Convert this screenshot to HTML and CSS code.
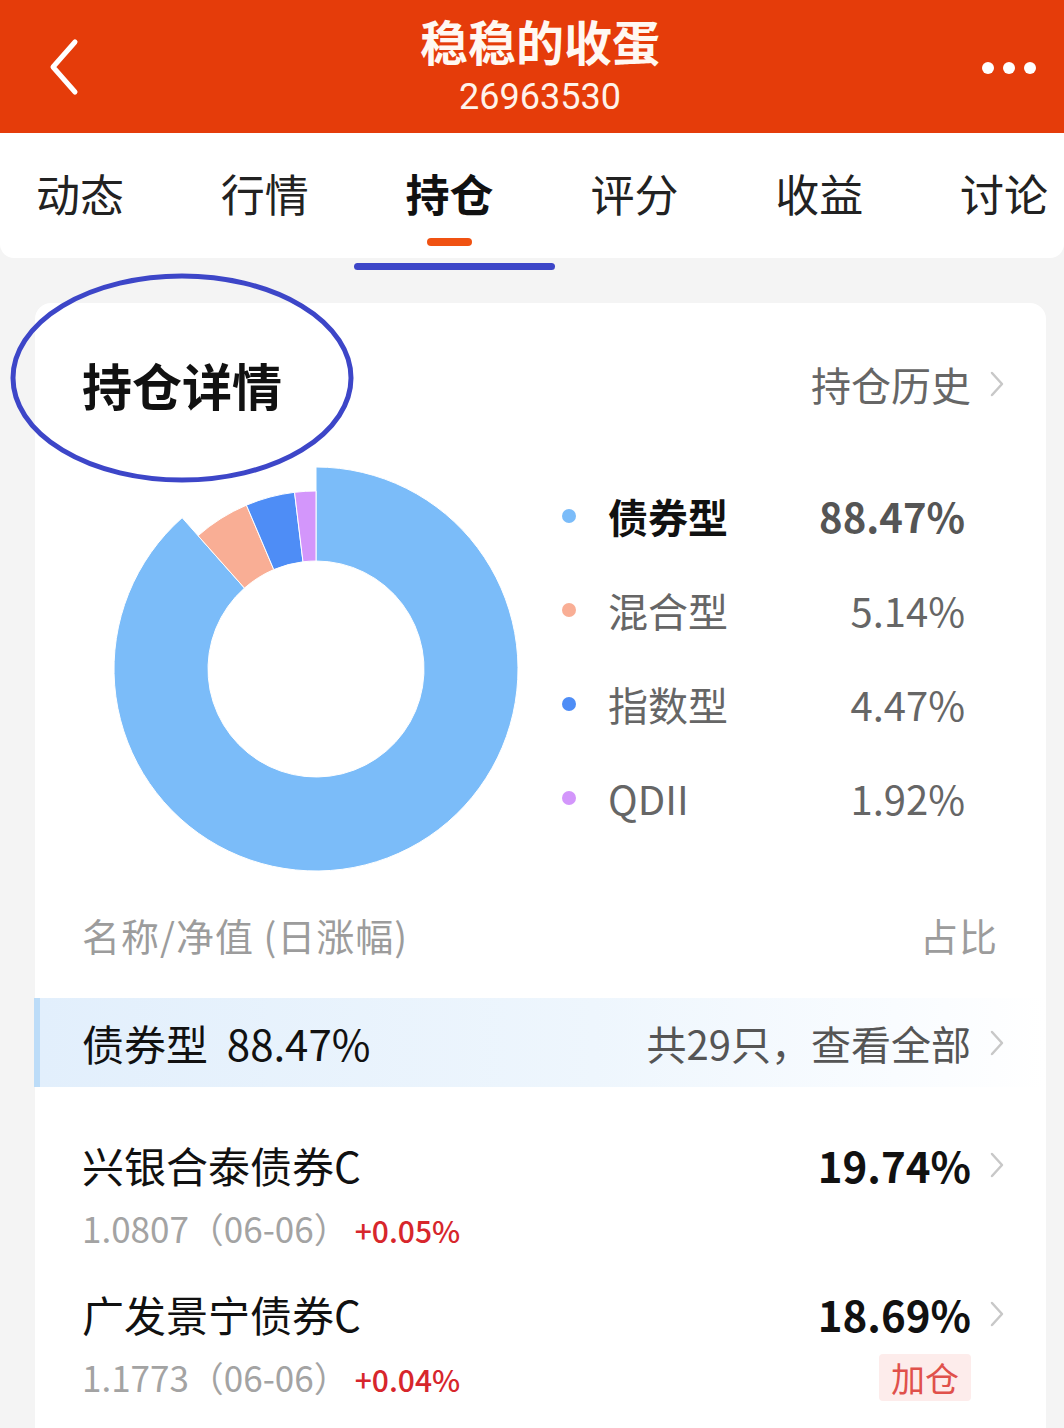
FILE: index.html
```html
<!DOCTYPE html>
<html lang="zh-CN">
<head>
<meta charset="utf-8">
<title>稳稳的收蛋</title>
<link rel="stylesheet" href="styles.css">
</head>
<body>
<div class="page">
  <header class="topbar">
    <svg class="back" width="40" height="60" viewBox="0 0 40 60"><polyline points="31,6 9,31 31,56" fill="none" stroke="#fff" stroke-width="5" stroke-linecap="round" stroke-linejoin="round"/></svg>
    <div class="title-wrap">
      <div class="title">稳稳的收蛋</div>
      <div class="subtitle">26963530</div>
    </div>
    <div class="more"><i></i><i></i><i></i></div>
  </header>

  <nav class="tabs">
    <div class="tab">动态</div>
    <div class="tab">行情</div>
    <div class="tab active">持仓<span class="bar"></span></div>
    <div class="tab">评分</div>
    <div class="tab">收益</div>
    <div class="tab">讨论</div>
  </nav>

  <main class="content">
    <section class="card">
      <div class="card-head">
        <h2 class="card-title">持仓详情</h2>
        <div class="head-link">持仓历史<svg class="chev" width="16" height="28" viewBox="0 0 16 28"><polyline points="3,3 13,14 3,25" fill="none" stroke="#c8c8c8" stroke-width="2.5" stroke-linecap="round" stroke-linejoin="round"/></svg></div>
      </div>

      <div class="chart-row">
        <svg class="donut" width="420" height="420" viewBox="0 0 420 420">
          <path d="M210,8 A202,202 0 1 1 76.15,58.71 L138.44,129.11 A108,108 0 1 0 210,102 Z" fill="#7bbcf9" stroke="#fff" stroke-width="1"/>
          <path d="M92.05,76.69 A178,178 0 0 1 140.42,46.16 L167.78,110.59 A108,108 0 0 0 138.44,129.11 Z" fill="#f9ae95" stroke="#fff" stroke-width="1"/>
          <path d="M140.42,46.16 A178,178 0 0 1 188.55,33.30 L196.99,102.79 A108,108 0 0 0 167.78,110.59 Z" fill="#4e8df6" stroke="#fff" stroke-width="1"/>
          <path d="M188.55,33.30 A178,178 0 0 1 210,32 L210,102 A108,108 0 0 0 196.99,102.79 Z" fill="#d396fb" stroke="#fff" stroke-width="1"/>
        </svg>
        <ul class="legend">
          <li class="legend-item main"><span class="dot c1"></span><span class="lg-name">债券型</span><span class="lg-val">88.47%</span></li>
          <li class="legend-item"><span class="dot c2"></span><span class="lg-name">混合型</span><span class="lg-val">5.14%</span></li>
          <li class="legend-item"><span class="dot c3"></span><span class="lg-name">指数型</span><span class="lg-val">4.47%</span></li>
          <li class="legend-item"><span class="dot c4"></span><span class="lg-name">QDII</span><span class="lg-val">1.92%</span></li>
        </ul>
      </div>

      <div class="table-head">
        <span>名称/净值 (日涨幅)</span>
        <span>占比</span>
      </div>

      <div class="group-row">
        <div class="group-name">债券型&nbsp; 88.47%</div>
        <div class="group-link">共29只，查看全部<svg class="chev" width="16" height="28" viewBox="0 0 16 28"><polyline points="3,3 13,14 3,25" fill="none" stroke="#c8c8c8" stroke-width="2.5" stroke-linecap="round" stroke-linejoin="round"/></svg></div>
      </div>

      <ul class="fund-list">
        <li class="fund">
          <div class="fund-left">
            <div class="fund-name">兴银合泰债券C</div>
            <div class="fund-sub">1.0807（06-06）<span class="up">+0.05%</span></div>
          </div>
          <div class="fund-right">
            <div class="fund-pct">19.74%<svg class="chev" width="16" height="28" viewBox="0 0 16 28"><polyline points="3,3 13,14 3,25" fill="none" stroke="#c8c8c8" stroke-width="2.5" stroke-linecap="round" stroke-linejoin="round"/></svg></div>
          </div>
        </li>
        <li class="fund">
          <div class="fund-left">
            <div class="fund-name">广发景宁债券C</div>
            <div class="fund-sub">1.1773（06-06）<span class="up">+0.04%</span></div>
          </div>
          <div class="fund-right">
            <div class="fund-pct">18.69%<svg class="chev" width="16" height="28" viewBox="0 0 16 28"><polyline points="3,3 13,14 3,25" fill="none" stroke="#c8c8c8" stroke-width="2.5" stroke-linecap="round" stroke-linejoin="round"/></svg></div>
            <div class="badge">加仓</div>
          </div>
        </li>
      </ul>
    </section>
  </main>

  <svg class="annot-ellipse" width="360" height="220" viewBox="0 0 360 220"><ellipse cx="178" cy="106" rx="169" ry="102" fill="none" stroke="#3d46c8" stroke-width="5"/></svg>
  <div class="annot-line"></div>
</div>
</body>
</html>
```

FILE: styles.css
```css
* { box-sizing: border-box; }
html, body { margin: 0; padding: 0; }
body {
  background: #f4f4f4;
  font-family: "Noto Sans CJK SC", "Noto Sans", sans-serif;
  color: #111;
  width: 1064px;
  height: 1428px;
  overflow: hidden;
}
ul { list-style: none; margin: 0; padding: 0; }
h2 { margin: 0; }

.page { position: relative; width: 1064px; height: 1428px; overflow: hidden; }

/* header */
.topbar {
  height: 133px;
  background: #e53c0a;
  display: grid;
  grid-template-columns: 1fr auto 1fr;
  align-items: center;
  padding: 0 28px 0 44px;
  color: #fff;
}
.back { display: block; margin-top: -2px; }
.title-wrap { text-align: center; display: flex; flex-direction: column; align-items: center; margin-top: -3px; }
.title { font-size: 48px; font-weight: 700; line-height: 48px; color: #fff8f2; }
.subtitle {
  font-family: Roboto, "Noto Sans", sans-serif;
  font-size: 36px;
  line-height: 36px;
  color: #fff3ea;
  margin-top: 15px;
}
.more { display: flex; gap: 9px; justify-self: end; margin-top: 2px; }
.more i { display: block; width: 12px; height: 12px; border-radius: 50%; background: #fff; }

/* tabs */
.tabs {
  height: 125px;
  background: #fff;
  display: flex;
  justify-content: space-between;
  padding: 38px 16px 0 36px;
  border-radius: 0 0 14px 14px;
}
.tab {
  font-size: 44px;
  line-height: 44px;
  color: #222;
  display: flex;
  flex-direction: column;
  align-items: center;
}
.tab.active { font-weight: 700; color: #111; }
.tab .bar {
  display: block;
  width: 45px;
  height: 8px;
  border-radius: 4px;
  background: #f05212;
  margin-top: 23px;
}

/* card */
.content { padding: 45px 18px 0 35px; }
.card {
  background: #fff;
  border-radius: 16px 16px 0 0;
  padding: 56px 41px 0 47px;
  height: 1125px;
}
.card-head {
  display: flex;
  justify-content: space-between;
  align-items: center;
  height: 50px;
}
.card-title { font-size: 50px; line-height: 50px; font-weight: 700; color: #111; }
.head-link {
  display: flex;
  align-items: center;
  font-size: 40px;
  color: #666;
}
.chev { display: block; margin-left: 18px; }

.chart-row {
  display: flex;
  margin-top: 50px;
  height: 420px;
}
.donut { display: block; margin-left: 24px; }
.legend {
  margin-left: 36px;
  width: 403px;
  padding-top: 10px;
}
.legend-item {
  height: 94px;
  display: flex;
  align-items: center;
  font-size: 40px;
  color: #666;
}
.legend-item .dot { width: 14px; height: 14px; border-radius: 50%; flex: none; }
.dot.c1 { background: #7bbcf9; }
.dot.c2 { background: #f9ae95; }
.dot.c3 { background: #4e8df6; }
.dot.c4 { background: #d396fb; }
.lg-name { margin-left: 32px; }
.lg-val { margin-left: auto; }
.legend-item.main .lg-name { font-weight: 700; color: #111; }
.legend-item.main .lg-val { font-weight: 700; color: #555; }

.table-head {
  display: flex;
  justify-content: space-between;
  font-size: 38px;
  line-height: 38px;
  letter-spacing: 1px;
  color: #9c9c9c;
  padding: 37px 7px 44px 0;
}

.group-row {
  margin: 0 -41px 0 -48px;
  height: 89px;
  border-left: 6px solid #bcdcf8;
  background: linear-gradient(90deg, #e2effc 0%, #eef6fd 55%, #f9fcff 85%, #ffffff 100%);
  display: flex;
  align-items: center;
  justify-content: space-between;
  padding: 0 41px 0 42px;
}
.group-name { font-size: 42px; color: #111; }
.group-link { display: flex; align-items: center; font-size: 40px; color: #555; }

.fund-list { padding-top: 34px; }
.fund {
  display: flex;
  justify-content: space-between;
  padding: 22px 0;
}
.fund-name { font-size: 42px; line-height: 44px; color: #111; }
.fund-sub {
  font-size: 35px;
  line-height: 36px;
  color: #a3a3a3;
  margin-top: 23px;
}
.fund-sub .up { color: #d7262c; font-weight: 500; font-size: 30px; margin-left: 6px; }
.fund-right { display: flex; flex-direction: column; align-items: flex-end; }
.fund-pct {
  display: flex;
  align-items: center;
  font-size: 42px;
  line-height: 44px;
  font-weight: 700;
  color: #111;
}
.badge {
  margin-top: 18px;
  margin-right: 34px;
  width: 92px;
  height: 47px;
  background: #fdeceb;
  color: #e0514b;
  font-size: 34px;
  line-height: 47px;
  text-align: center;
  border-radius: 4px;
}

/* hand-drawn annotations overlay */
.annot-ellipse { position: absolute; left: 4px; top: 272px; }
.annot-line {
  position: absolute;
  left: 354px;
  top: 263px;
  width: 201px;
  height: 7px;
  border-radius: 4px;
  background: #3d46c8;
}
```
